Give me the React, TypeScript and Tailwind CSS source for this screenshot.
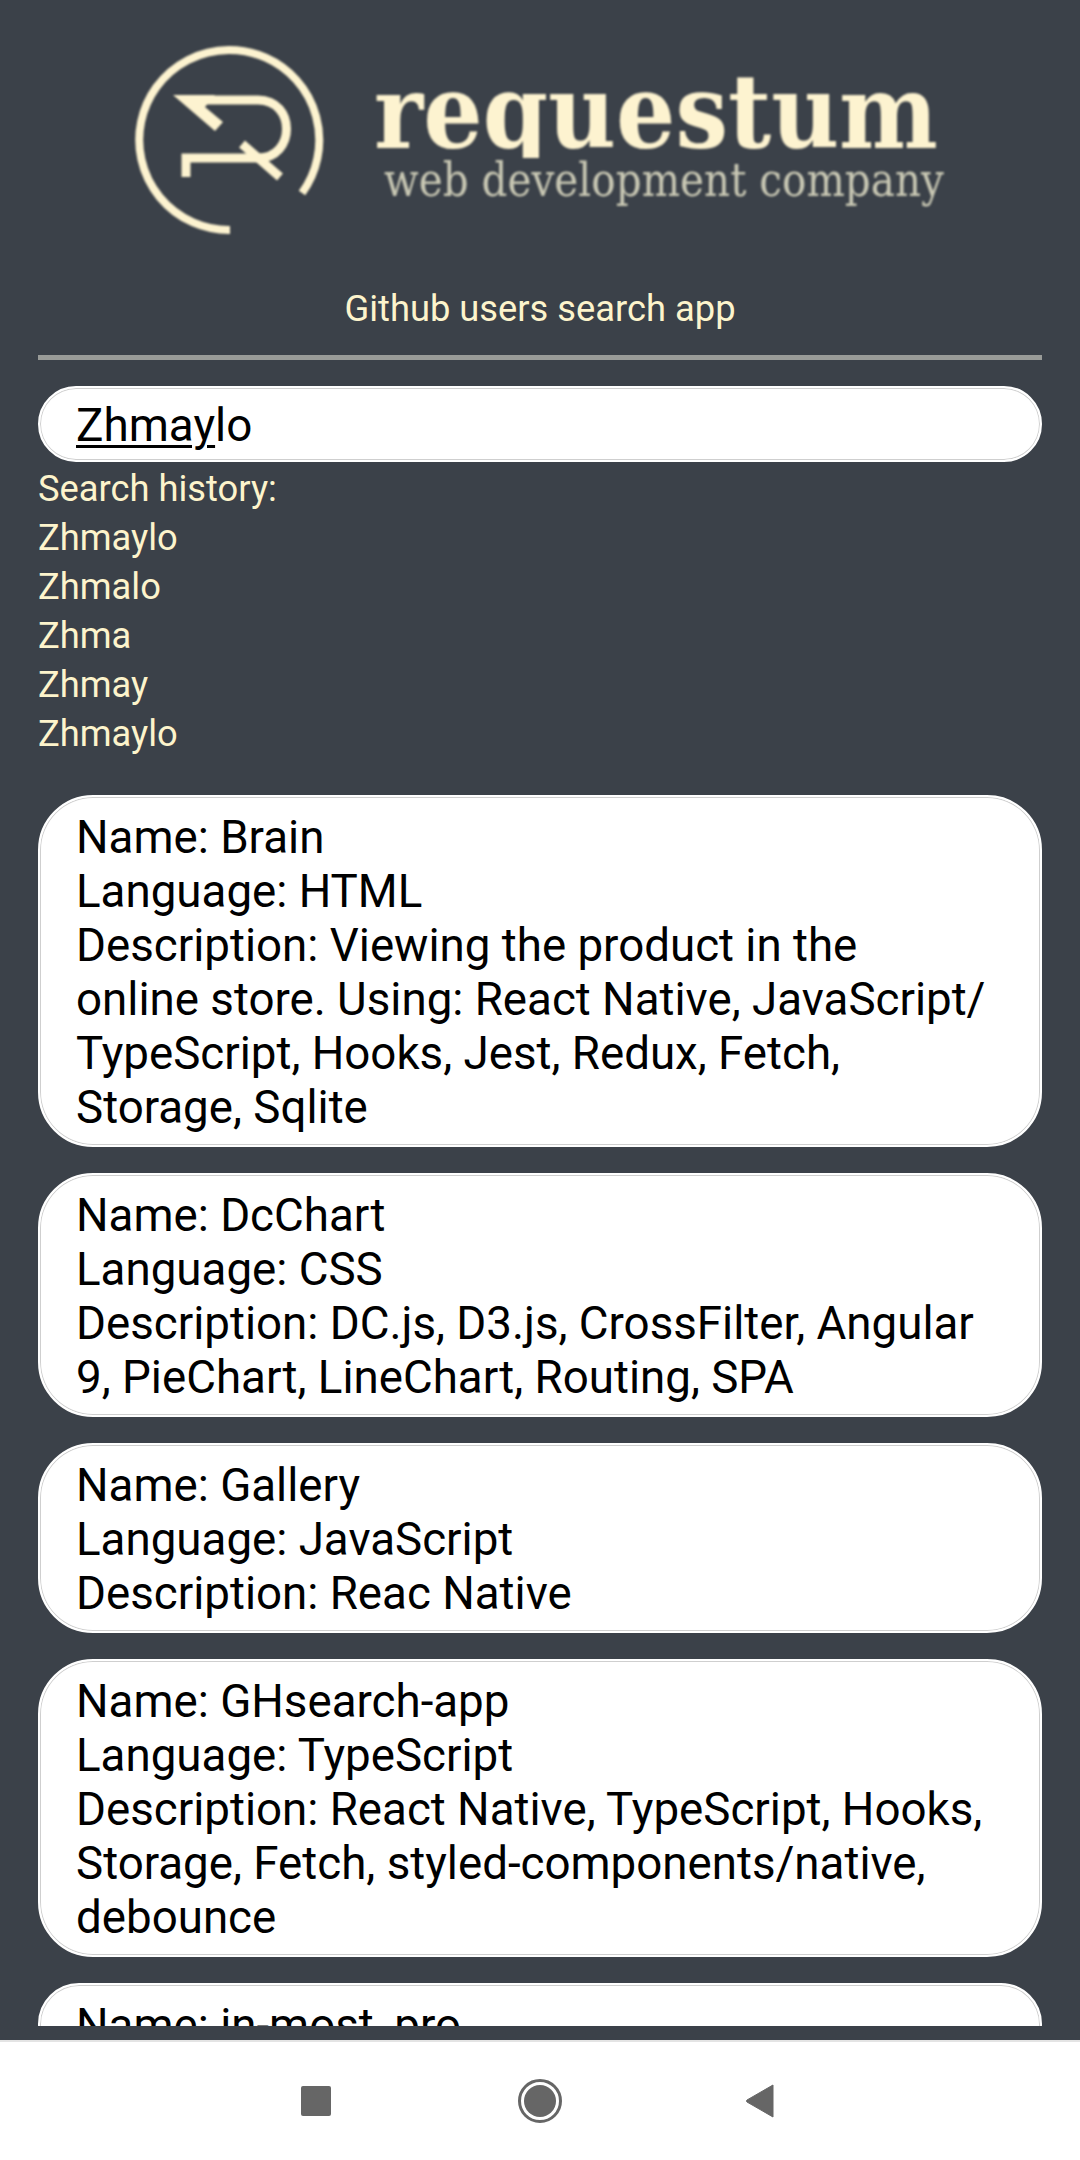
const cards = [
  ["Name: Brain", "Language: HTML", "Description: Viewing the product in the online store. Using: React Native, JavaScript/ TypeScript, Hooks, Jest, Redux, Fetch, Storage, Sqlite"],
  ["Name: DcChart", "Language: CSS", "Description: DC.js, D3.js, CrossFilter, Angular 9, PieChart, LineChart, Routing, SPA"],
  ["Name: Gallery", "Language: JavaScript", "Description: Reac Native"],
  ["Name: GHsearch-app", "Language: TypeScript", "Description: React Native, TypeScript, Hooks, Storage, Fetch, styled-components/native, debounce"],
  ["Name: in-most_pro"],
];
const history = ["Zhmaylo", "Zhmalo", "Zhma", "Zhmay", "Zhmaylo"];

function Logo() {
  return (
    <svg width="1080" height="246" viewBox="0 0 1080 246" className="block" style={{ filter: "blur(0.8px)" }}>
      <defs>
        <clipPath id="wordmark"><rect x="360" y="60" width="600" height="98" /></clipPath>
      </defs>
      <g fill="none" stroke="#fdf3d0">
        <path d="M230 230 A90 90 0 1 1 302 193" strokeWidth="8" />
        <path d="M200 100 H258 C296 100 296 158 258 158 H186 V177" strokeWidth="9" />
        <path d="M242 144 L280 177" strokeWidth="9" />
      </g>
      <polygon points="173,95 215,95 205,107 223,122 215,131" fill="#fdf3d0" />
      <g clipPath="url(#wordmark)">
        <text x="374" y="148" fontFamily="'DejaVu Serif', serif" fontWeight="700" fontSize="102" textLength="564" lengthAdjust="spacingAndGlyphs" fill="#fdf3d0">requestum</text>
      </g>
      <text x="384" y="196" fontFamily="'DejaVu Serif', serif" fontSize="46" textLength="560" lengthAdjust="spacingAndGlyphs" fill="#c9c8b4">web development company</text>
    </svg>
  );
}

export default function App() {
  return (
    <div className="w-[1080px] h-[2160px] flex flex-col bg-[#3b4149] font-['Roboto',sans-serif] overflow-hidden">
      <div className="h-[2026px] shrink-0 overflow-hidden">
        <Logo />
        <div className="h-[109px] pt-[42px] text-center text-[36.3px] leading-[42px] text-[#fdf4cc]">Github users search app</div>
        <div className="px-[38px]">
          <div className="h-[5px] bg-[#999b98]" />
          <div className="mt-[26px] h-[76px] rounded-[38px] bg-white border-2 border-white shadow-[inset_0_0_0_1px_#cfcfcf] pl-[36px] pt-[5px] flex items-center text-[45.8px] text-black">
            <span><span className="underline decoration-[3px] underline-offset-[4px]">Zhmay</span>lo</span>
          </div>
          <div className="mt-[2px] text-[36.3px] leading-[49px] text-[#fdf4cc]">
            <div>Search history:</div>
            {history.map((h, i) => (
              <div key={i}>{h}</div>
            ))}
          </div>
          <div className="mt-[37px] flex flex-col gap-[26px]">
            {cards.map((c, i) => (
              <div key={i} className="rounded-[55px] bg-white border-2 border-white shadow-[inset_0_0_0_1px_#cfcfcf] pl-[36px] pr-[50px] pt-[14px] pb-[10px] text-[45.7px] leading-[54px] text-black">
                {c.map((l, j) => (
                  <div key={j}>{l}</div>
                ))}
              </div>
            ))}
          </div>
        </div>
      </div>
      <div className="h-[14px] shrink-0" />
      <div className="flex-1 bg-white border-t-2 border-[#e4e4e4] flex items-center justify-center pr-[5px]">
        <div className="w-[30px] h-[30px] rounded-[2px] bg-[#666666] mr-[187px]" />
        <div className="w-[44px] h-[44px] rounded-full border-[3px] border-[#666666] p-[3px] mr-[184px]">
          <div className="w-full h-full rounded-full bg-[#666666]" />
        </div>
        <svg width="28" height="34" viewBox="0 0 28 34">
          <path d="M27 1 V33 L1 18 Q0 17 1 16 Z" fill="#666666" stroke="#666666" strokeLinejoin="round" />
        </svg>
      </div>
    </div>
  );
}
